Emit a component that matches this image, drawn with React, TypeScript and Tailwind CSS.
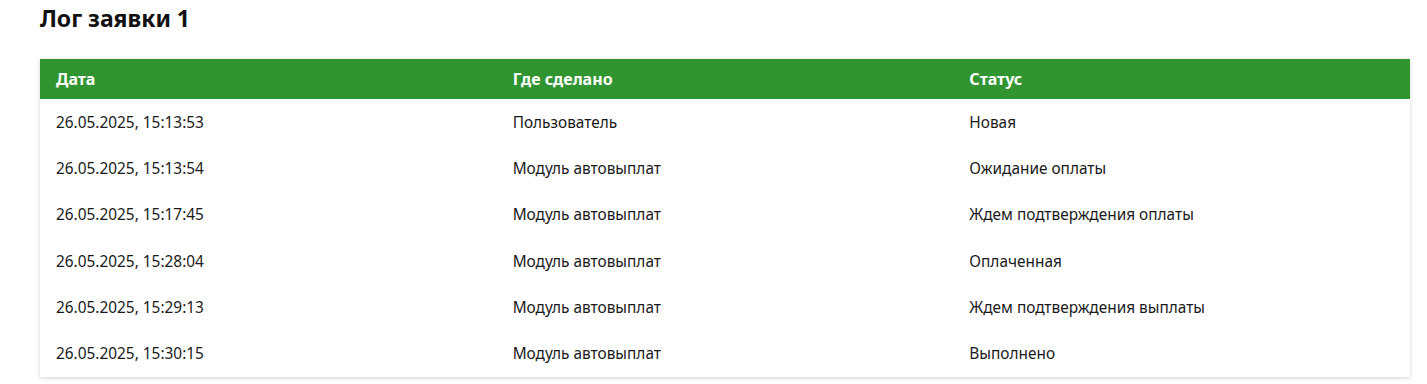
import { FC } from 'react'

type LogRow = {
  date: string
  source: string
  status: string
}

const rows: LogRow[] = [
  { date: '26.05.2025, 15:13:53', source: 'Пользователь', status: 'Новая' },
  { date: '26.05.2025, 15:13:54', source: 'Модуль автовыплат', status: 'Ожидание оплаты' },
  { date: '26.05.2025, 15:17:45', source: 'Модуль автовыплат', status: 'Ждем подтверждения оплаты' },
  { date: '26.05.2025, 15:28:04', source: 'Модуль автовыплат', status: 'Оплаченная' },
  { date: '26.05.2025, 15:29:13', source: 'Модуль автовыплат', status: 'Ждем подтверждения выплаты' },
  { date: '26.05.2025, 15:30:15', source: 'Модуль автовыплат', status: 'Выполнено' },
]

const App: FC = () => {
  return (
    <div className="min-h-[384px] bg-white pl-10 pr-[17px] pt-[3px] font-['Noto_Sans',sans-serif] text-[#1a1a1a]">
      <h1 className="text-[23px] font-bold leading-[30px] text-[#111]">Лог заявки 1</h1>
      <div className="mt-[26px] bg-white shadow-[0_1px_4px_rgba(0,0,0,0.18)]">
        <div className="grid h-10 grid-cols-3 items-center bg-[#309531] text-[16px] font-bold text-white">
          <div className="px-4">Дата</div>
          <div className="px-4">Где сделано</div>
          <div className="px-4">Статус</div>
        </div>
        {rows.map((row) => (
          <div key={row.date} className="grid h-[46.33px] grid-cols-3 items-center text-[15.4px]">
            <div className="px-4">{row.date}</div>
            <div className="px-4">{row.source}</div>
            <div className="px-4">{row.status}</div>
          </div>
        ))}
      </div>
    </div>
  )
}

export default App
